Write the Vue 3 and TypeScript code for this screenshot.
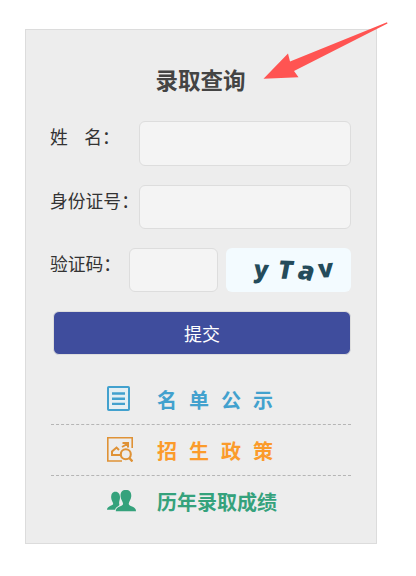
<script setup lang="ts">
import { ref } from 'vue'

const fullName = ref('')
const idNumber = ref('')
const captcha = ref('')

const links = [
  { key: 'list', label: '名 单 公 示' },
  { key: 'policy', label: '招 生 政 策' },
  { key: 'history', label: '历年录取成绩' },
]
</script>

<template>
  <main class="page">
    <section class="card">
      <h1 class="title">录取查询</h1>
      <form class="form" @submit.prevent>
        <div class="row first">
          <label class="label" for="name"><span class="name">姓 名</span><span class="colon">：</span></label>
          <input id="name" v-model="fullName" class="field" type="text" />
        </div>
        <div class="row">
          <label class="label" for="idno"><span>身份证号</span><span class="colon">：</span></label>
          <input id="idno" v-model="idNumber" class="field" type="text" />
        </div>
        <div class="row code">
          <label class="label" for="code"><span>验证码</span><span class="colon">：</span></label>
          <input id="code" v-model="captcha" class="field" type="text" />
          <svg class="captcha" width="125" height="44" viewBox="0 0 125 44">
            <text transform="translate(27 29.5) rotate(3) skewX(-4)" font-size="24">y</text>
            <text transform="translate(50.5 30.5) rotate(2) skewX(-9)" font-size="25.5">T</text>
            <text transform="translate(70 30) rotate(12) skewX(-6)" font-size="26">a</text>
            <text transform="translate(92.5 30) rotate(-5) skewX(-2)" font-size="25">v</text>
          </svg>
        </div>
        <button class="submit" type="submit">提交</button>
      </form>
      <nav class="links">
        <a v-for="link in links" :key="link.key" class="link" :class="link.key">
          <span class="icon">
            <svg v-if="link.key === 'list'" width="23" height="25" viewBox="0 0 23 25">
              <rect x="1" y="1" width="21" height="23" rx="0.8" fill="#e5eff3" stroke="currentColor" stroke-width="2" />
              <path d="M5 7.5h13M5 12.7h13M5 17.9h13" stroke="currentColor" stroke-width="2.4" />
            </svg>
            <svg v-else-if="link.key === 'policy'" width="26" height="25" viewBox="0 0 26 25" fill="none" stroke="currentColor">
              <path d="M25.2 11V.8H.8V24H15" stroke-width="1.6" />
              <path d="M13 18H5V14.5L9.5 10.5L12 13M15 10L21 6.5M15.5 6H21V10.5" stroke-width="2" />
              <circle cx="18.8" cy="17.3" r="5" stroke-width="2.1" />
              <path d="M22.3 21L25.5 24.5" stroke-width="2.4" />
            </svg>
            <svg v-else width="29" height="22" viewBox="0 0 29 22" fill="currentColor">
              <path d="M8.5 1.8C5.2 1.8 4 4.3 4.2 8C4.4 10.7 6 12 6.2 14C6.1 15.8 0 15.8 0 19.8H8.2C8.5 16.8 12.2 16.2 12.4 14.8C11.5 12.5 12.9 10 13 8C13.2 4.3 11.4 1.8 8.5 1.8Z" />
              <path d="M18.9 .1C14.8 .1 13.2 2.6 13.6 6.8C13.8 9.9 16 11.5 16.1 14C15.7 16.6 8.8 16 8.8 21.2H29C29 16 22.1 16.6 21.7 14C21.8 11.5 24 9.9 24.2 6.8C24.6 2.6 23 .1 18.9 .1Z" />
            </svg>
          </span>
          <span>{{ link.label }}</span>
        </a>
      </nav>
      <svg class="arrow" width="126" height="58" viewBox="0 0 126 58">
        <path d="M.5 56.8L25 31.5L27 39.5L124 .3L124.5 1.6L31 49L35.5 55.3Z" fill="#ff5452" />
      </svg>
    </section>
  </main>
</template>

<style>
body {
  background: #fff;
}
</style>

<style scoped>
.page {
  padding: 29px 0 0 25px;
  font-family: 'Noto Sans CJK SC', sans-serif;
}
.card {
  position: relative;
  box-sizing: border-box;
  width: 352px;
  height: 515px;
  padding: 0 25px;
  border: 1px solid #dcdcdc;
  background: #ededed;
}
.title {
  margin: 0;
  padding: 33px 1px 26px 0;
  font-size: 22.5px;
  line-height: 32px;
  font-weight: 700;
  color: #444;
  text-align: center;
}
.row {
  display: flex;
  justify-content: space-between;
  height: 44px;
  margin-bottom: 19px;
}
.first {
  height: 45px;
}
.label {
  display: flex;
  flex: none;
  box-sizing: border-box;
  width: 89px;
  margin-left: -1px;
  font-size: 17.8px;
  line-height: 30px;
  color: #333;
  white-space: nowrap;
}
.name {
  word-spacing: 12.5px;
}
.code .label {
  width: 79px;
}
.field {
  box-sizing: border-box;
  min-width: 0;
  flex: 1;
  margin: 0;
  padding: 0 10px;
  border: 1px solid #ddd;
  border-radius: 6px;
  background: #f4f4f4;
  font: inherit;
  outline: none;
}
.captcha {
  flex: none;
  margin-left: 8px;
  border-radius: 6px;
  background: #f3fbff;
  font-family: 'Open Sans', sans-serif;
  font-weight: 800;
  fill: #244b5b;
}
.submit {
  display: block;
  box-sizing: border-box;
  width: 298px;
  height: 44px;
  margin: 0 0 0 2px;
  padding: 0;
  border: 1px solid #ddd;
  border-radius: 6px;
  background: #3f4d9d;
  color: #fff;
  font: 18px 'Noto Sans CJK SC', sans-serif;
}
.links {
  padding-top: 19px;
}
.link {
  display: flex;
  align-items: center;
  box-sizing: border-box;
  height: 51px;
  padding-left: 56px;
  font-size: 20px;
  font-weight: 700;
  word-spacing: 7.5px;
  border-bottom: 1px dashed #b5b5b5;
}
.link:last-child {
  border-bottom: 0;
}
.icon {
  display: flex;
  width: 50px;
  padding-bottom: 2px;
}
.list {
  color: #42a1ce;
}
.policy {
  color: #fb9b2b;
}
.policy .icon {
  color: #df9236;
}
.history {
  color: #35a27c;
}
.arrow {
  position: absolute;
  left: 237px;
  top: -8px;
}
</style>
